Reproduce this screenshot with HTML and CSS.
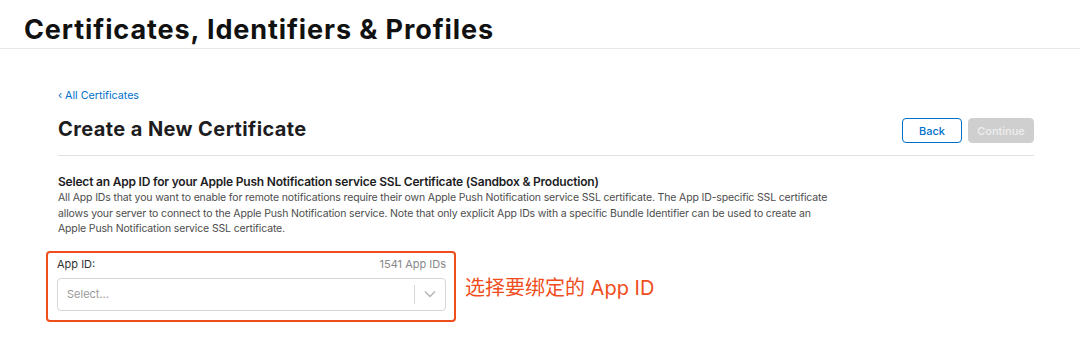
FILE: index.html
```html
<!DOCTYPE html>
<html>

	<head>
		<meta charset="UTF-8">
		<title>Create a New Certificate</title>
		<link rel="stylesheet" href="styles.css">
	</head>

	<body>
		<div class="top">
			<h1>Certificates, Identifiers &amp; Profiles</h1>
		</div>
		<div class="main">
			<a class="backLink" href="##">&lsaquo; All Certificates</a>
			<div class="titleRow">
				<h2>Create a New Certificate</h2>
				<div class="btns">
					<button class="btn back">Back</button>
					<button class="btn next" disabled>Continue</button>
				</div>
			</div>
			<div class="section">
				<h3>Select an App ID for your Apple Push Notification service SSL Certificate (Sandbox &amp; Production)</h3>
				<p>All App IDs that you want to enable for remote notifications require their own Apple Push Notification service SSL certificate. The App ID-specific SSL certificate allows your server to connect to the Apple Push Notification service. Note that only explicit App IDs with a specific Bundle Identifier can be used to create an Apple Push Notification service SSL certificate.</p>
			</div>
			<div class="pickRow">
				<!--红框标注-->
				<div class="mark">
					<div class="field">
						<div class="fieldHead">
							<label>App ID:</label>
							<span class="count">1541 App IDs</span>
						</div>
						<div class="select">
							<span class="ph">Select...</span>
							<span class="sep"></span>
							<svg class="arrow" width="12" height="8" viewBox="0 0 12 8">
								<path d="M1 1.5 L6 6.5 L11 1.5" fill="none" stroke="#b3b3b3" stroke-width="1.3" />
							</svg>
						</div>
					</div>
				</div>
				<span class="tip">选择要绑定的 App ID</span>
			</div>
		</div>
	</body>

</html>
```

FILE: styles.css
```css
* {
	margin: 0;
	padding: 0;
}

body {
	background: #fff;
	font-family: Inter, "Noto Sans", "Noto Sans CJK SC", sans-serif;
	color: #1d1d1f;
}

.top {
	padding: 14px 0 2px 24px;
	border-bottom: 1px solid #e8e8e8;
}

.top h1 {
	font-size: 27px;
	line-height: 32px;
	font-weight: 700;
	color: #111;
	letter-spacing: 0.9px;
}

.main {
	padding: 0 46px 0 58px;
}

.backLink {
	display: block;
	margin-top: 40px;
	font-size: 10.7px;
	line-height: 14px;
	color: #0070c9;
	text-decoration: none;
}

.titleRow {
	display: flex;
	justify-content: space-between;
	align-items: flex-start;
	margin-top: 15px;
	padding-bottom: 12px;
	border-bottom: 1px solid #e0e0e0;
}

.titleRow h2 {
	font-size: 20px;
	line-height: 20px;
	font-weight: 700;
	color: #1d1d1f;
	letter-spacing: 0.4px;
	margin-top: 1px;
}

.btns {
	display: flex;
	gap: 6px;
}

.btn {
	height: 25px;
	font-family: Inter, "Noto Sans", sans-serif;
	font-size: 11px;
	border-radius: 4px;
}

.back {
	width: 60px;
	background: #fff;
	color: #0070c9;
	border: 1px solid #0070c9;
	font-weight: 500;
}

.next {
	width: 66px;
	background: #cfcfcf;
	color: #eee;
	border: 1px solid #cfcfcf;
	font-weight: 500;
}

.section {
	margin-top: 18px;
}

.section h3 {
	font-size: 12px;
	line-height: 15px;
	font-weight: 600;
	color: #1d1d1f;
	letter-spacing: -0.2px;
}

.section p {
	font-size: 10.5px;
	line-height: 15.5px;
	color: #4d4d4d;
	letter-spacing: -0.15px;
	width: 775px;
	margin-top: 1px;
}

.pickRow {
	display: flex;
	align-items: center;
	gap: 9px;
	margin: 14px 0 0 -12px;
}

.mark {
	border: 2px solid #f04d1d;
	border-radius: 4px;
	padding: 4px 8px 9px 9px;
}

.field {
	width: 389px;
}

.fieldHead {
	display: flex;
	justify-content: space-between;
	font-size: 11px;
	line-height: 14px;
	margin-bottom: 7px;
}

.fieldHead label {
	color: #333;
}

.fieldHead .count {
	color: #888;
}

.select {
	display: flex;
	align-items: center;
	height: 31px;
	border: 1px solid #d6d6d6;
	border-radius: 4px;
	padding-left: 9px;
}

.ph {
	flex: 1;
	font-size: 11px;
	color: #999;
}

.sep {
	width: 1px;
	height: 19px;
	background: #d6d6d6;
}

.arrow {
	margin: 0 9px 0 9px;
}

.tip {
	font-size: 20px;
	color: #f04d1d;
}
```
